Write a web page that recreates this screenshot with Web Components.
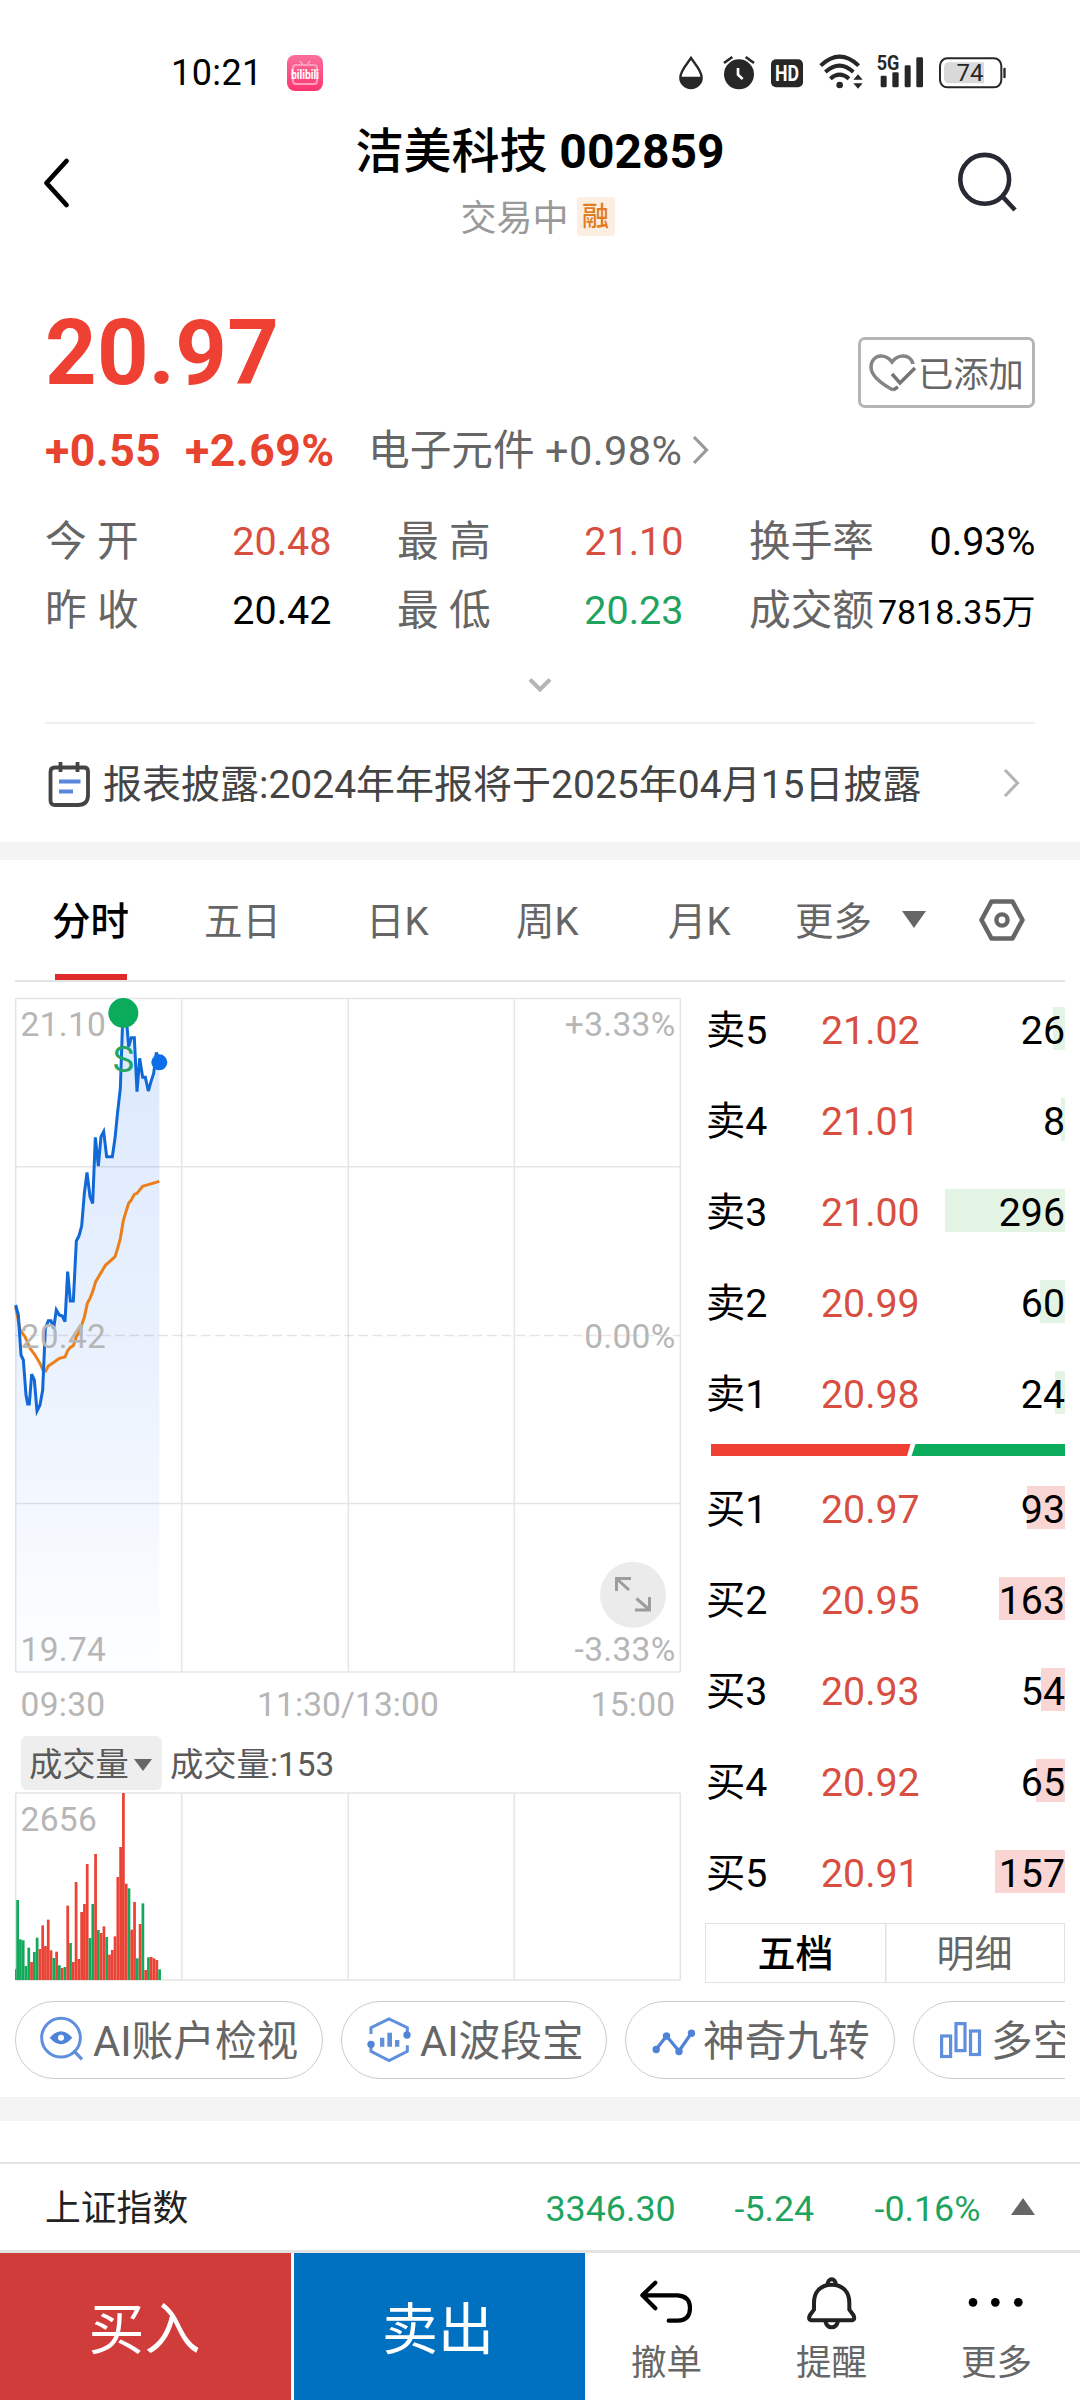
<!DOCTYPE html>
<html lang="zh-CN">
<head>
<meta charset="utf-8">
<title>洁美科技 002859</title>
<style>
html,body{margin:0;padding:0;background:#fff}
body{width:1080px;height:2400px;overflow:hidden;font-family:Roboto,"Noto Sans CJK SC",sans-serif;color:#000}
</style>
</head>
<body>
<stock-app></stock-app>
<script>
const define=(name,html,setup)=>{
  customElements.define(name,class extends HTMLElement{
    connectedCallback(){
      if(this.shadowRoot)return;
      const root=this.attachShadow({mode:'open'});
      const t=document.createElement('template');
      t.innerHTML=typeof html==='function'?html(this):html;
      root.append(t.content.cloneNode(true));
      if(setup)setup(this,root);
    }
  });
};

/* name: [viewBox, width, height, markup] */
const ICONS={
  bili:['0 0 36 36',36,36,`<defs><linearGradient id="g" x2="0" y2="1"><stop stop-color="#f9709d"/><stop offset="1" stop-color="#fc3570"/></linearGradient></defs><rect width="36" height="36" rx="8" fill="url(#g)"/><path d="M13 6l3 4M23 6l-3 4M9 10h18q3 0 3 3v13q0 3-3 3H9q-3 0-3-3V13q0-3 3-3z" fill="none" stroke="#ff9dbd" stroke-width="2"/><text x="18" y="23.5" text-anchor="middle" textLength="28" lengthAdjust="spacingAndGlyphs" font-family="Roboto" font-size="12" font-weight="700" fill="#fff">bilibili</text>`],
  drop:['54 38 78 111',26,37,`<path d="M93 53C82 70 61 91 61 112a32 31 0 0 0 64 0C125 91 104 70 93 53z" fill="#fff" stroke="#272727" stroke-width="7"/><path d="M60 109h66a33 34 0 0 1-66 0z" fill="#272727"/>`],
  alarm:['186 38 102 111',34,37,`<circle cx="237" cy="102" r="45" fill="#272727"/><path d="M192 68l25-18M282 68l-25-18" stroke="#272727" stroke-width="8"/><path d="M234 83v20l14 13" fill="none" stroke="#fff" stroke-width="8"/>`],
  hd:['330 38 102 111',34,37,`<rect x="333" y="57" width="96" height="84" rx="15" fill="#272727"/><text x="381" y="123" text-anchor="middle" textLength="72" lengthAdjust="spacingAndGlyphs" font-family="Roboto" font-size="68" font-weight="700" fill="#fff">HD</text>`],
  wifi:['474 38 138 111',46,37,`<g fill="none" stroke="#272727" stroke-width="12"><path d="M482 76q57-54 114 0"/><path d="M496 95q43-38 84 0"/><path d="M511 115q28-24 56 0"/></g><circle cx="539" cy="134" r="10" fill="#272727"/><path d="M580 118l14-16 14 16zM580 129h28l-14 16z" fill="#272727"/>`],
  signal:['648 38 144 111',48,37,`<text x="650" y="90" textLength="68" lengthAdjust="spacingAndGlyphs" font-family="Roboto" font-size="58" font-weight="700" fill="#272727">5G</text><g fill="#272727"><rect x="662" y="106" width="18" height="35" rx="4"/><rect x="697" y="96" width="19" height="45" rx="4"/><rect x="734" y="75" width="18" height="66" rx="4"/><rect x="769" y="51" width="20" height="90" rx="4"/></g>`],
  battery:['834 38 207 111',69,37,`<rect x="840" y="54" width="184" height="87" rx="22" fill="#fff" stroke="#272727" stroke-width="6"/><path d="M868 66h104v63H868q-16 0-16-16V82q0-16 16-16z" fill="#d9d9d9"/><rect x="1030" y="82" width="7" height="32" rx="3" fill="#272727"/><text x="930" y="123" text-anchor="middle" font-family="Roboto" font-size="72" fill="#272727">74</text>`],
  back:['0 0 28 50',28,50,`<path d="M23.500 3L3.500 25l20 22" fill="none" stroke="#000" stroke-width="4.800" stroke-linecap="round" stroke-linejoin="round"/>`],
  search:['0 0 60 62',60,62,`<circle cx="27.7" cy="28.3" r="24.4" fill="none" stroke="#272a33" stroke-width="4.6"/><path d="M45 45l13 14" stroke="#272a33" stroke-width="4.6"/>`],
  heart:['0 0 50 40',50,40,`<path d="M25 37C12 30 3 22 3 14 3 7 8 3 13 3c5 0 8 2 11 6 3-4 6-6 11-6 5 0 9 3 10 8" fill="none" stroke="#858585" stroke-width="3.500"/><path d="M25 37l5-3M24 21l8 9 15-15" fill="none" stroke="#757575" stroke-width="3.500"/>`],
  right:['0 0 18 30',18,30,`<path d="M2 2l12.500 13L2 28" fill="none" stroke="currentColor" stroke-width="3.200"/>`],
  down:['0 0 24 16',24,16,`<path d="M2 2.500L12 12.500 22 2.500" fill="none" stroke="#b5b5b5" stroke-width="4"/>`],
  note:['0 0 44 47',44,47,`<path d="M8 6.500h29q4 0 4 4V34q0 10-10 10H8q-4.500 0-4.500-4.500v-28.500Q3.500 6.500 8 6.500z" fill="none" stroke="#444" stroke-width="3.800"/><path d="M13.500 1v10M30.500 1v10" stroke="#444" stroke-width="3.800"/><path d="M12 20.500h21.500M12 30.500h14" stroke="#5a86dc" stroke-width="4.200"/>`],
  tri:['0 0 24 17',24,17,`<path d="M0 0h24L12 17z" fill="#666"/>`],
  hex:['0 0 46 42',46,42,`<path d="M12.500 2.500h21L43.500 21l-10 18.500h-21L2.500 21z" fill="none" stroke="#666" stroke-width="4.600" stroke-linejoin="round"/><circle cx="23" cy="21" r="5.600" fill="none" stroke="#666" stroke-width="4.400"/>`],
  eye:['60 18 132 135',44,45,`<circle cx="123" cy="83" r="58" fill="none" stroke="#5f8fdd" stroke-width="9"/><path d="M163 124l23 24" stroke="#5f8fdd" stroke-width="10"/><path d="M89 83q34-39 68 0-34 39-68 0z" fill="#4f83d8"/><circle cx="123" cy="83" r="9" fill="#fff"/>`],
  wave:['1038 18 138 141',46,47,`<g fill="none" stroke="#5f8fdd" stroke-width="9"><path d="M1053 72V53l54-26 55 26v18M1162 106v18l-55 28-54-28v-16"/></g><circle cx="1161" cy="75" r="11" fill="#4f83d8"/><circle cx="1053" cy="103" r="11" fill="#4f83d8"/><path d="M1080 83h13v27h-13zM1102 68h14v42h-14zM1125 90h13v20h-13z" fill="#5f8fdd"/>`],
  zig:['0 0 44 28',44,28,`<path d="M4 20.500L14.500 7l12.500 15L39.500 4" fill="none" stroke="#4f83d8" stroke-width="3.200"/><g fill="#4f83d8"><circle cx="4.200" cy="20.500" r="3.700"/><circle cx="14.500" cy="7" r="3.700"/><circle cx="27" cy="22.500" r="3.700"/><circle cx="39.500" cy="4.200" r="3.700"/></g>`],
  bars:['0 0 42 37',42,37,`<g fill="none" stroke="#5f8fdd" stroke-width="3.200"><rect x="1.600" y="14" width="9" height="20.500"/><rect x="16" y="1.600" width="9" height="27"/><rect x="30.500" y="9" width="9" height="23.500"/></g>`],
  undo:['120 85 165 145',55,48.33,`<path d="M169 99l-39 38 39 39M130 137h106q37 3 37 38 0 37-37 38h-27" fill="none" stroke="#000" stroke-width="12.500" stroke-linecap="round" stroke-linejoin="round"/>`],
  bell:['615 75 160 165',53.33,55,`<g fill="none" stroke="#222" stroke-width="12" stroke-linejoin="round"><path d="M695 104c-36 0-53 25-53 54v21l-12 16q-8 16 8 16h114q16 0 8-16l-12-16v-21c0-29-17-54-53-54z"/><path d="M683 103a12 15 0 0 1 24 0M676 213q4 19 19 19t19-19"/></g>`],
  dots:['1105 130 175 50',58.33,16.67,`<circle cx="1123" cy="155" r="13"/><circle cx="1190" cy="155" r="13"/><circle cx="1259" cy="155" r="13"/>`]
};
define('ui-icon',el=>{
  const [vb,w,h,body]=ICONS[el.getAttribute('name')];
  return `<style>:host{display:block;flex:none;width:${w}px;height:${h}px}svg{display:block;overflow:visible}</style><svg width="${w}" height="${h}" viewBox="${vb}">${body}</svg>`;
});

define('status-bar',`<style>
:host{display:block;height:97px}
.row{display:flex;align-items:flex-start}
time{font-size:36px;letter-spacing:.4px;line-height:47px;margin:50px 0 0 171px;width:116px}
.app{margin-top:55px}
.icons{display:flex;margin:52.600px 0 0 355px}
</style><div class="row"><time>10:21</time><ui-icon class="app" name="bili"></ui-icon>
<div class="icons"><ui-icon name="drop"></ui-icon><ui-icon name="alarm" style="margin-left:18px"></ui-icon><ui-icon name="hd" style="margin-left:14px"></ui-icon><ui-icon name="wifi" style="margin-left:14px"></ui-icon><ui-icon name="signal" style="margin-left:12px"></ui-icon><ui-icon name="battery" style="margin-left:14px"></ui-icon></div></div>`);

define('page-header',`<style>
:host{display:flex;height:173px;justify-content:space-between;padding:0 63px 0 43px}
.back{margin-top:61px}.search{margin-top:54px}
.mid{display:flex;flex-direction:column;align-items:center;padding:27px 0 0 52px}
h1{margin:0;font-size:48px;line-height:56px;font-weight:700;white-space:pre}
h1 span{font-weight:500}
.sub{display:flex;margin-top:17px;gap:8px;padding-right:5px}
.state{font-size:36px;line-height:45px;color:#999}
.tag{width:38px;height:39px;background:#fdeee2;color:#e27c1e;font-size:27px;line-height:41px;text-align:center;border-radius:3px;font-weight:500}
</style><ui-icon class="back" name="back"></ui-icon>
<div class="mid"><h1><span>洁美科技</span> 002859</h1><div class="sub"><span class="state">交易中</span><span class="tag">融</span></div></div>
<ui-icon class="search" name="search"></ui-icon>`);

define('stat-cell',el=>`<style>
:host{display:flex;justify-content:space-between;align-items:baseline;width:286.500px;height:69px;line-height:69px;white-space:nowrap}
.l{font-size:41.700px;color:#666}
.v{font-size:${el.getAttribute('size')||39.5}px;color:${el.getAttribute('color')||'#000'};margin-left:-12px;position:relative;top:-1px}
</style><span class="l">${el.getAttribute('label')}</span><span class="v"><slot></slot></span>`);

define('quote-panel',`<style>
:host{display:block;height:413px;padding:39px 45px 0}
.top{display:flex;justify-content:space-between;height:117px}
.price{font-size:90px;line-height:90px;font-weight:700;color:#ee4134;letter-spacing:.3px}
.add{display:flex;align-items:center;box-sizing:border-box;width:177px;height:71px;margin-top:28px;border:3px solid #b5b5b5;border-radius:7px;padding-left:7px;font-size:35.300px;color:#666}
.add span{line-height:71px;margin-top:5px}
.chg{display:flex;line-height:50px;white-space:nowrap}
.chg b{font-size:44.500px;letter-spacing:.5px;color:#e8432f;width:140px}
.chg b+b{width:183px}
.sec{font-size:41.700px;color:#666;width:177px}
.pct{font-size:41.500px;letter-spacing:.4px;color:#666;width:147px}
.chg ui-icon{color:#999;margin-top:9px}
.grid{display:grid;grid-template-columns:repeat(3,285px);column-gap:67px;margin-top:30.500px}
.more{margin:32px auto 0}
</style>
<div class="top"><div class="price">20.97</div><div class="add"><ui-icon name="heart"></ui-icon><span>已添加</span></div></div>
<div class="chg"><b>+0.55</b><b>+2.69%</b><span class="sec">电子元件</span><span class="pct">+0.98%</span><ui-icon name="right"></ui-icon></div>
<div class="grid">
<stat-cell label="今 开" color="#d84e40">20.48</stat-cell><stat-cell label="最 高" color="#d84e40">21.10</stat-cell><stat-cell label="换手率">0.93%</stat-cell>
<stat-cell label="昨 收">20.42</stat-cell><stat-cell label="最 低" color="#1fa45f">20.23</stat-cell><stat-cell label="成交额" size="34">7818.35万</stat-cell>
</div><ui-icon class="more" name="down"></ui-icon>`);

define('notice-row',`<style>
:host{display:flex;margin:0 45px;height:118px;border-top:2px solid #eee;padding-left:2px;font-size:39px;color:#444;line-height:122.500px;white-space:nowrap}
.i{margin-top:37px}.t{margin-left:12px;flex:1}.r{margin:43.500px 14px 0 0;color:#b5b5b5}
</style><ui-icon class="i" name="note"></ui-icon><span class="t"><slot></slot></span><ui-icon class="r" name="right"></ui-icon>`);

define('section-gap',`<style>:host{display:block;background:#f4f4f4}</style>`);

define('period-tabs',`<style>
:host{display:flex;margin:0 15px;height:120px;border-bottom:2px solid #e3e3e3;font-size:38.500px;line-height:124px;color:#666;white-space:nowrap;padding-left:37px}
span{flex:none}
.on{color:#000;font-weight:500;width:152px}
.on::after{content:"";display:block;margin:-10px 0 0 3px;width:72px;height:6px;background:#e02a2a}
.t{margin:51px 0 0 30px}.h{margin:38.500px 0 0 53px}
</style><span class="on">分时</span><span style="width:162px">五日</span><span style="width:150px">日K</span><span style="width:152px">周K</span><span style="width:127px">月K</span><span>更多</span><ui-icon class="t" name="tri"></ui-icon><ui-icon class="h" name="hex"></ui-icon>`);

define('price-chart',`<style>:host{display:block;height:748px}svg{display:block}text{font:33.500px Roboto,sans-serif;fill:#b6b6b6;letter-spacing:.3px}.e{text-anchor:end}</style>
<svg width="672" height="748" viewBox="12 982 672 748">
<defs><linearGradient id="f" gradientUnits="userSpaceOnUse" x1="0" y1="50" x2="0" y2="2075"><stop stop-color="#dbe8fd"/><stop offset=".5" stop-color="#e9f1fe"/><stop offset="1" stop-color="#fdfeff"/></linearGradient></defs>
<g transform="translate(0 980) scale(.333333)">
<path fill="url(#f)" d="M47 975L55 1005 63 1125 70 1140 78 1245 83 1272 88 1272 95 1182 103 1200 111 1293 120 1275 128 1230 136 1045 145 1022 153 1022 161 1045 169 990 178 1005 187 1008 195 1025 203 875 211 963 220 963 229 783 237 768 245 738 253 640 261 577 270 650 278 670 286 472 295 558 303 470 311 455 320 530 337 530 345 475 353 395 361 325 367 150 370 100 378 100 386 200 394 173 403 173 411 335 419 235 428 292 436 292 445 333 453 305 461 280 469 217 478 246V2075H47z"/></g>
<g fill="none" stroke="#000" stroke-opacity=".1" stroke-width="1.500"><path d="M15.700 998.500H680.300M15.700 1166.700H680.300M15.700 1503.600H680.300M15.700 1672H680.300M15.700 998.500V1672M181.700 998.500V1672M348.300 998.500V1672M514.300 998.500V1672M680.300 998.500V1672"/><path d="M15 1335.400H680" stroke-dasharray="10 4.300"/></g>
<g transform="translate(0 980) scale(.333333)" fill="none">
<path stroke="#ea7f1c" stroke-width="9" d="M47 980L60 1050 75 1070 90 1105 103 1122 120 1150 128 1168 137 1173 145 1158 160 1148 178 1135 195 1131 203 1112 211 1102 220 1097 229 1070 237 1058 245 1035 253 1012 262 970 270 955 278 935 287 905 303 878 317 855 332 842 345 830 353 805 361 775 370 722 378 695 386 670 394 660 403 643 411 640 428 619 445 614 478 604"/>
<path stroke="#1169d8" stroke-width="9" d="M47 975L55 1005 63 1125 70 1140 78 1245 83 1272 88 1272 95 1182 103 1200 111 1293 120 1275 128 1230 136 1045 145 1022 153 1022 161 1045 169 990 178 1005 187 1008 195 1025 203 875 211 963 220 963 229 783 237 768 245 738 253 640 261 577 270 650 278 670 286 472 295 558 303 470 311 455 320 530 337 530 345 475 353 395 361 325 367 150 370 100 378 100 386 200 394 173 403 173 411 335 419 235 428 292 436 292 445 333 453 305 461 280 469 217 478 246"/>
<circle cx="478" cy="247" r="24" fill="#0c6ee8"/><circle cx="370" cy="99" r="45" fill="#0bab5c"/></g>
<circle cx="633" cy="1594.800" r="33" fill="#ebebeb"/>
<path d="M616.500 1591V1578.500H631M617 1579L629 1590M635 1610H649.500V1597M648.500 1609L636.500 1598.500" fill="none" stroke="#9c9c9c" stroke-width="3"/>
<text x="20.500" y="1036">21.10</text><text x="20.500" y="1347.500">20.42</text><text x="20.500" y="1660.500">19.74</text>
<text class="e" x="675.500" y="1036">+3.33%</text><text class="e" x="675.500" y="1347.500">0.00%</text><text class="e" x="675.500" y="1660.500">-3.33%</text>
<text x="20.500" y="1715.800">09:30</text><text x="348" y="1715.800" text-anchor="middle" style="letter-spacing:.1px">11:30/13:00</text><text class="e" x="675.500" y="1715.800">15:00</text>
<text x="123.700" y="1071.500" text-anchor="middle" style="font-size:36px;fill:#1fa567">S</text>
</svg>`);

const VOL='g780 g898 g901 g978 g923 r966 g936 g893 r927 r856 r918 r839 r931 g954 r935 g976 r984 g981 r797 g909 r966 r726 r957 r816 r792 r672 g894 g792 r642 g870 r879 r859 g891 r944 r930 r889 r711 r621 r459 r731 g745 r869 r786 g955 r852 g790 r990 g952 r951 r955 r960 g988'.split(' ');
define('volume-chart',()=>{
  const bars=VOL.map((v,i)=>{const y=+v.slice(1);return `<rect x="${(48.8+i*8.35).toFixed(2)}" y="${y}" width="8.200" height="${1020-y}" fill="${v[0]==='g'?'#12a95d':'#ea4335'}"/>`;}).join('');
  return `<style>:host{display:block}
.hd{display:flex;height:54px;margin:6px 0 0 9px;font-size:33.300px;line-height:58px;color:#5a5a5a;white-space:nowrap}
.sel{display:flex;box-sizing:border-box;width:141px;height:54px;background:#eee;border-radius:6px;padding-left:8px;margin-right:8px}
.sel i{margin:23px 0 0 5px;width:0;height:0;border:9px solid transparent;border-top:12px solid #666;border-bottom:0}
svg{display:block}text{font:33.500px Roboto,sans-serif;fill:#b6b6b6;letter-spacing:.3px}</style>
<div class="hd"><span class="sel">成交量<i></i></span><span>成交量:153</span></div>
<svg width="672" height="194" viewBox="12 1790 672 194"><path d="M15.700 1793H680.300M15.700 1980H680.300M15.700 1793V1980M181.700 1793V1980M348.300 1793V1980M514.300 1793V1980M680.300 1793V1980" fill="none" stroke="#e5e5e5" stroke-width="1.600"/>
<text x="20.500" y="1831">2656</text>
<g transform="translate(0 1640) scale(.333333)"><rect x="45" y="988" width="4" height="32" fill="#c4524a"/>${bars}</g></svg>`;
});

define('order-row',el=>`<style>
:host{display:flex;height:91px;align-items:flex-start;font-size:39.300px;line-height:97.500px;white-space:nowrap;color:#000}
.l{width:115px}.p{width:119px;color:#d84e40}
.v{flex:1;text-align:right;height:43px;margin-top:24px;line-height:49.500px;background:linear-gradient(${el.getAttribute('side')==='s'?'#e3f3e4,#e3f3e4':'#f9d5d4,#f9d5d4'}) right/${el.getAttribute('depth')}px 100% no-repeat}
</style><span class="l">${el.getAttribute('label')}</span><span class="p">${el.getAttribute('price')}</span><span class="v">${el.getAttribute('qty')}</span>`);

define('order-book',()=>{
  const row=(side,r)=>`<order-row side="${side}" label="${r[0]}" price="${r[1]}" qty="${r[2]}" depth="${r[3]}"></order-row>`;
  const S=[['卖5','21.02',26,12],['卖4','21.01',8,4],['卖3','21.00',296,120],['卖2','20.99',60,25],['卖1','20.98',24,10]];
  const B=[['买1','20.97',93,38],['买2','20.95',163,66],['买3','20.93',54,24],['买4','20.92',65,29],['买5','20.91',157,70]];
  return `<style>:host{display:flex;flex-direction:column;width:359px;padding-top:.5px}
.ratio{height:12px;margin:6px 0 6px 5px;display:block}
.tabs{display:flex;box-sizing:border-box;width:360px;height:60px;margin:6px 0 0 -1px;border:1.500px solid #e2e2e2;font-size:38px;line-height:61px;text-align:center}
.tabs b{flex:1;font-weight:500;box-shadow:1.500px 0 #e2e2e2}.tabs span{flex:1;color:#666}
</style>${S.map(r=>row('s',r)).join('')}
<svg class="ratio" width="354" height="12"><path d="M0 0H199.500L196 12H0z" fill="#ee4134"/><path d="M204.500 0H354V12H200.500z" fill="#0bab5c"/></svg>
${B.map(r=>row('b',r)).join('')}<div class="tabs"><b>五档</b><span>明细</span></div>`;
});

define('tool-chip',el=>`<style>
:host{display:flex;box-sizing:border-box;flex:none;align-items:flex-start;width:${el.getAttribute('w')}px;height:78px;border:1.500px solid #ccc;border-radius:39px;padding-left:${el.getAttribute('pad')}px;font-size:41.700px;line-height:80px;color:#666;white-space:nowrap}
ui-icon{margin:${el.getAttribute('top')}px ${el.getAttribute('gap')}px 0 0}
</style><ui-icon name="${el.getAttribute('icon')}"></ui-icon><slot></slot>`);

define('chip-row',`<style>:host{display:flex;box-sizing:border-box;gap:18px;margin:0 15px;height:107px;padding-top:11px;overflow:hidden}</style>
<tool-chip icon="eye" w="308" pad="24" gap="9" top="13.500">AI账户检视</tool-chip><tool-chip icon="wave" w="266" pad="24" gap="8" top="13.500">AI波段宝</tool-chip><tool-chip icon="zig" w="270" pad="26" gap="7" top="26.500">神奇九转</tool-chip><tool-chip icon="bars" w="308" pad="26" gap="9" top="19.500">多空</tool-chip>`);

define('index-bar',`<style>
:host{display:flex;box-sizing:border-box;height:91px;margin-top:41px;border-top:2px solid #e3e3e3;border-bottom:3px solid #e3e3e3;font-size:35.800px;line-height:90px;white-space:nowrap;padding-left:45px;color:#1fa45f}
.n{color:#222;width:500.500px;line-height:91px}.a{width:189px}.b{width:140px}.c{width:136.500px}
ui-icon{transform:rotate(180deg);margin-top:34px}
</style><span class="n">上证指数</span><span class="a">3346.30</span><span class="b">-5.24</span><span class="c">-0.16%</span><ui-icon name="tri"></ui-icon>`);

define('trade-bar',`<style>
:host{display:flex;height:147px}
.t{box-sizing:border-box;width:291px;background:#d03c39;color:#fff;font-size:56px;line-height:154px;height:147px;text-align:center;margin-right:3px;padding-right:2px}
.s{background:#0070c0;margin-right:0;padding-right:3px}
.k{width:165px;display:flex;flex-direction:column;align-items:center;font-size:35.500px;color:#666}
.k:nth-of-type(n+3){margin-left:-1px;margin-right:1px}
.i{height:99px;display:flex;align-items:center}
.k span{line-height:50px;margin-top:-14px}
</style><div class="t">买入</div><div class="t s">卖出</div>
<div class="k"><div class="i"><ui-icon name="undo"></ui-icon></div><span>撤单</span></div>
<div class="k"><div class="i"><ui-icon name="bell"></ui-icon></div><span>提醒</span></div>
<div class="k"><div class="i"><ui-icon name="dots"></ui-icon></div><span>更多</span></div>`);

define('stock-app',`<style>
:host{display:block;width:1080px;height:2400px;background:#fff;overflow:hidden}
.main{display:flex;height:1008px;padding-left:12px}
.charts{width:694px}
</style>
<status-bar></status-bar><page-header></page-header><quote-panel></quote-panel>
<notice-row>报表披露:2024年年报将于2025年04月15日披露</notice-row>
<section-gap style="height:18px"></section-gap>
<period-tabs></period-tabs>
<div class="main"><div class="charts"><price-chart></price-chart><volume-chart></volume-chart></div><order-book></order-book></div>
<chip-row></chip-row>
<section-gap style="height:24px"></section-gap>
<index-bar></index-bar><trade-bar></trade-bar>`);
</script>
</body>
</html>
